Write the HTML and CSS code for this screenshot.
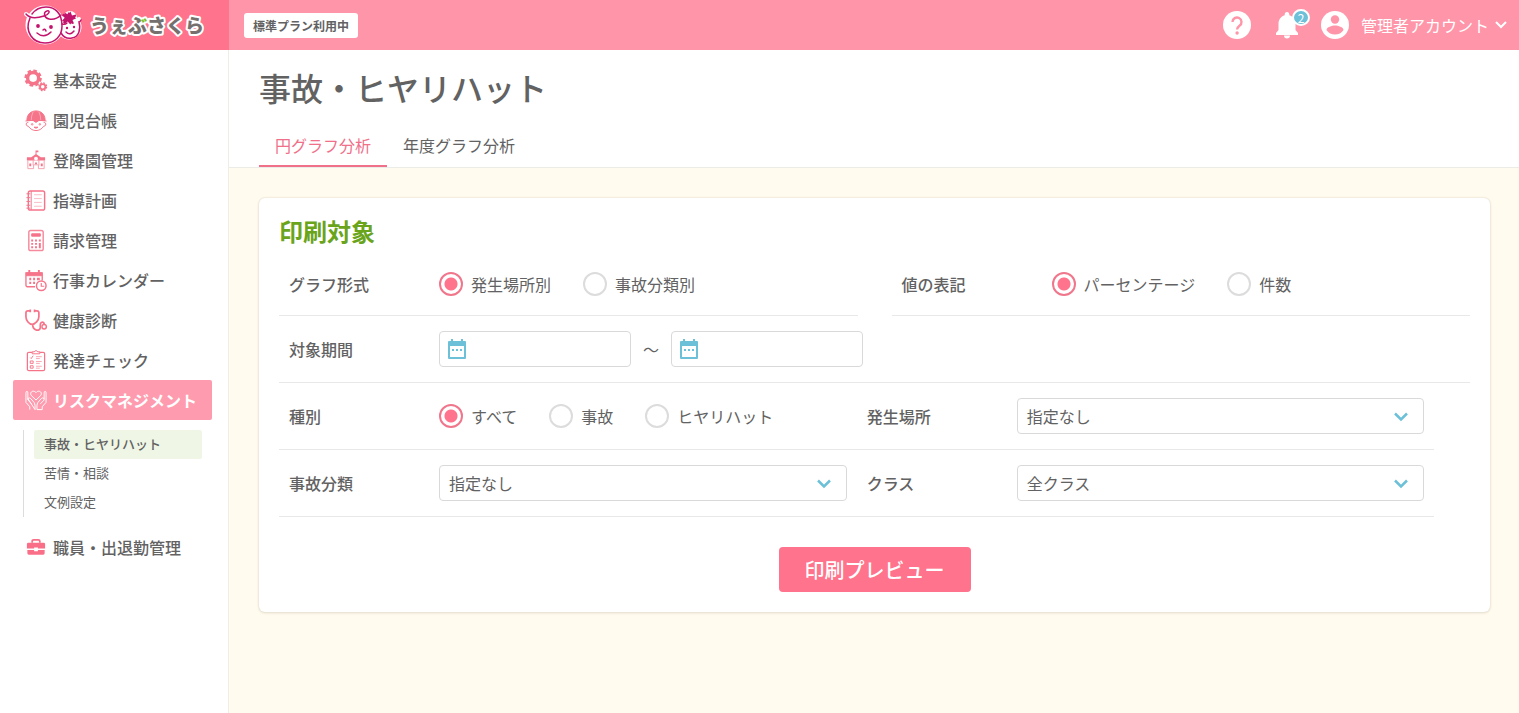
FILE: index.html
```html
<!DOCTYPE html>
<html lang="ja">
<head>
<meta charset="utf-8">
<title>事故・ヒヤリハット</title>
<meta name="viewport" content="width=device-width, initial-scale=1">
<link rel="stylesheet" href="styles.css">
</head>
<body>
<header class="topbar">
  <a class="brand" href="#">
    <svg class="brand-logo" width="190" height="50" viewBox="0 0 190 50" role="img" aria-label="うぇぶさくら">
      <defs>
        <pattern id="logo-ink" patternUnits="userSpaceOnUse" x="0" y="0" width="190" height="50">
          <rect width="190" height="50" fill="#75706e"/>
          <path d="M122 13h8v10h-5l-3-3z" fill="#7fbe26"/>
        </pattern>
      </defs>
      <g fill="#fff" stroke="#fff" stroke-width="4" stroke-linejoin="round" stroke-linecap="round">
        <circle cx="27" cy="25" r="17.500"/><circle cx="51" cy="27" r="10.500"/><circle cx="52" cy="18" r="5"/>
        <path d="M8 14q5 5 14 4M59 20l2-1"/>
      </g>
      <g fill="none" stroke="#c3146d" stroke-width="1.500" stroke-linecap="round">
        <path d="M12 18C6 32 15 43 27 43c10 0 17-7 17-17C44 13 37 7 28 7c-6 0-11 3-14 7"/>
        <path d="M8 14c4 5 12 4 18 2 5-1 7-6 3-5-4 1-3 7 2 8 5 1 9-1 12-4"/>
        <path d="M43 33c3 5 7 6 11 5 7-1 9-9 7-16q1 0 2-2M44 24q3 1 5-1"/>
        <path d="M19 33q7 6 14-1M48 32q4 4 8-1M25 30q2-2 3 1"/>
      </g>
      <g fill="#c3146d"><circle cx="20" cy="26" r="1.900"/><circle cx="33" cy="27" r="1.900"/><circle cx="49" cy="28" r="1.200"/><circle cx="56" cy="27" r="1.200"/>
        <path d="M50 12l1 1 1.500-1.500 1.500 4 4-1v2l-1 .5 1 1.500-3.500 1.500 1.500 3.500-2 .5-.8-.8-1 1.300-2.500-3-3.200 2.400-1.500-1.400.7-1-1.700-.8 2.700-3-2.700-2.500 1.200-1.500 1.200.5.3-1.500 3 1.500z"/></g>
      <text class="brand-name" x="72" y="33" fill="url(#logo-ink)">うぇぶさくら</text>
    </svg>
  </a>
  <div class="topbar-main">
    <span class="plan">標準プラン利用中</span>
    <div class="tools">
      <a class="tool" href="#" aria-label="ヘルプ">
        <svg width="28" height="28" viewBox="0 0 28 28"><circle cx="14" cy="14" r="14" fill="#fff"/><path d="M9.500 11a4.500 4.500 0 1 1 7 3.700c-1.600 1.200-2.400 1.800-2.400 3.700" fill="none" stroke="#ff95a9" stroke-width="2.400"/><circle cx="14.100" cy="22" r="1.700" fill="#ff95a9"/></svg>
      </a>
      <a class="tool" href="#" aria-label="お知らせ">
        <svg width="24" height="28" viewBox="0 0 24 28" fill="#fff"><path d="M12 1c1.500 0 2.300 1 2.300 2.500v.8c4 1.100 6.200 4.600 6.200 8.700v6l2.500 3v2H1v-2l2.500-3v-6c0-4.100 2.200-7.600 6.200-8.700v-.8C9.700 2 10.500 1 12 1zM9 24.500h6a3 3 0 0 1-6 0z"/></svg>
        <span class="count">2</span>
      </a>
      <a class="account" href="#">
        <svg width="28" height="28" viewBox="0 0 28 28"><circle cx="14" cy="14" r="14" fill="#fff"/><circle cx="14" cy="8.500" r="4.200" fill="#ff95a9"/><path d="M5.500 19c0-3 5.500-4.600 8.500-4.600s8.500 1.600 8.500 4.600c-2 3-5 4.600-8.500 4.600S7.500 22 5.500 19z" fill="#ff95a9"/></svg>
        <span>管理者アカウント</span>
        <svg class="account-arrow" width="12" height="8" viewBox="0 0 12 8" fill="none" stroke="#fff" stroke-width="2"><path d="M1 1l5 5 5-5"/></svg>
      </a>
    </div>
  </div>
</header>
<div class="layout">
  <nav class="sidebar">
    <a class="nav-item" href="#">
      <svg class="nav-icon" viewBox="0 0 24 24" fill="none" stroke="#f6748a"><circle cx="9" cy="9.500" r="5.800" stroke-width="3.600"/><circle cx="9" cy="9.500" r="7.900" stroke-width="2.400" stroke-dasharray="3.700 2.500"/><circle cx="19" cy="18.500" r="2.800" stroke-width="1.900"/><circle cx="19" cy="18.500" r="4" stroke-width="1.400" stroke-dasharray="1.800 1.350"/></svg>
      <span>基本設定</span></a>
    <a class="nav-item" href="#">
      <svg class="nav-icon" viewBox="0 0 24 24" fill="none" stroke="#f6748a"><path d="M2.500 11C3 5 7 2 12 2s9 3 9.500 9v1h-19z" fill="#f6748a"/><path d="M9 3Q7 7 7 12M15 3q2 4 2 9" stroke="#fbb9c4" stroke-width=".8"/><path d="M1 12.500q11-2 22 0M4 14c-3-.5-3 4 0 4 2 3 5 4.500 8 4.500s6-1.500 8-4.500c3 0 3-4.500 0-4"/><path d="M9 12h6l-3 2zM10 19h4q-2 2-4 0z" fill="#f6748a"/><circle cx="8" cy="16" r=".8"/><circle cx="16" cy="16" r=".8"/></svg>
      <span>園児台帳</span></a>
    <a class="nav-item" href="#">
      <svg class="nav-icon" viewBox="0 0 24 24" fill="#f6748a"><path d="M11.500 1.500h3v2h-2v2L17 8.500h4.500V12h-19V8.500H7l4.500-3z"/><path d="M3.500 12v8.500h6v-4h5v4h6V12M9 11v6M15 11v6" fill="none" stroke="#f6a0ae"/><circle cx="12" cy="10" r="2" fill="#fff"/><path d="M5 15h2v3H5zM17 15h2v3h-2zM11 14h2v2h-2z"/></svg>
      <span>登降園管理</span></a>
    <a class="nav-item" href="#">
      <svg class="nav-icon" viewBox="0 0 24 24" fill="none" stroke="#f6748a"><rect x="4" y="2" width="17" height="20" rx="2" stroke-width="1.500"/><path d="M7 2v20M2 5h4M2 9h4M2 13h4M2 17h4M2 20h4"/><path d="M10 6h8M10 10h8M10 14h8M10 18h8" stroke="#f9bac4"/></svg>
      <span>指導計画</span></a>
    <a class="nav-item" href="#">
      <svg class="nav-icon" viewBox="0 0 24 24" fill="none" stroke="#f68a9c"><rect x="4.500" y="1.500" width="15" height="21" rx="2" stroke-width="1.500"/><path d="M7.500 5h9v2.500h-9z" fill="#f6748a" stroke="#f6748a"/><path d="M7 12h2m2 0h2m2 0h2M7 15.500h2m2 0h2m2 0h2M7 19h2m2 0h2m2 0h2M16 15v5" stroke="#f6748a" stroke-width="2"/></svg>
      <span>請求管理</span></a>
    <a class="nav-item" href="#">
      <svg class="nav-icon" viewBox="0 0 24 24" fill="none" stroke="#f6748a"><path d="M11 18.500H3q-1.500 0-1.500-2V4h17v8" stroke-width="1.400"/><path d="M2 4h16v3H2z" fill="#f6748a"/><path d="M5 1v4M15 1v4" stroke-width="2"/><path d="M5 10.500h2m2 0h2m2 0h3M5 14.500h2m2 0h2" stroke-width="2.500"/><circle cx="17.500" cy="17.500" r="5" stroke-width="1.500"/><path d="M17.500 14.500v3.500h3" stroke-width="1.200"/></svg>
      <span>行事カレンダー</span></a>
    <a class="nav-item" href="#">
      <svg class="nav-icon" viewBox="0 0 24 24" fill="none" stroke="#f6748a" stroke-width="1.800"><path d="M6 2H3.500Q1.500 2 1.500 4v4c0 4 3.500 8 6.500 8s7-4 7-8V4q0-2-2-2H10.500M8.500 16c0 7 8 8 8 3 0-3-.5-4 1-5 2-1 3 .5 3 2M6 .6v2.800M10.500 .6v2.800"/><circle cx="20.500" cy="18.500" r="2.300" stroke-width="1.500"/></svg>
      <span>健康診断</span></a>
    <a class="nav-item" href="#">
      <svg class="nav-icon" viewBox="0 0 24 24" fill="none" stroke="#f6748a"><rect x="3" y="3.500" width="18" height="19" rx="1.500" stroke-width="1.300"/><path d="M8 5V3h2q2-3 4 0h2v2z" fill="#fff"/><path d="M6 9l1 1 2-3M6 12.500h3v2.500H6zM6 17.500h3V20H6z"/><path d="M12 8h6M12 10h4M12 13h6M12 15h4M12 18h6M12 20h4" stroke="#f9a5b3"/></svg>
      <span>発達チェック</span></a>
    <a class="nav-item nav-item-active" href="#">
      <svg class="nav-icon" viewBox="0 0 24 24" fill="none" stroke="#fff" stroke-linejoin="round"><path d="M12 11.500L7.300 7C4.500 3.800 9 .2 12 3.800 15 .2 19.500 3.800 16.700 7z"/><path d="M5.500 21.500v-3L1.500 14V4q0-1.500 1-1.500t1 1.500v7.500l4 4M3.500 10q1.500-1.500 3 0l3.500 4q1 1.500 1 3.500v4zM18.500 21.500v-3l4-4.500V4q0-1.500-1-1.500t-1 1.500v7.500l-4 4M20.500 10q-1.500-1.500-3 0L14 14q-1 1.500-1 3.500v4h5.500"/></svg>
      <span>リスクマネジメント</span></a>
    <div class="subnav">
      <a class="sub-item sub-item-active" href="#">事故・ヒヤリハット</a>
      <a class="sub-item" href="#">苦情・相談</a>
      <a class="sub-item" href="#">文例設定</a>
    </div>
    <a class="nav-item" href="#">
      <svg class="nav-icon" viewBox="0 0 24 24" fill="#fa6f88"><path d="M8 7V5.500Q8 4 9.500 4h5Q16 4 16 5.500V7" fill="none" stroke="#fa6f88" stroke-width="1.800"/><path d="M4 7h16q1.500 0 1.500 1.500V13H14v-1h-4v1H2.500V8.500Q2.500 7 4 7zM3 14.500h7v1.500h4v-1.500h7V18q0 1.500-1.500 1.500h-15Q3 19.500 3 18z"/></svg>
      <span>職員・出退勤管理</span></a>
  </nav>
  <main class="main">
    <div class="page-head">
      <h1 class="page-title">事故・ヒヤリハット</h1>
      <div class="tabs">
        <a class="tab tab-active" href="#">円グラフ分析</a>
        <a class="tab" href="#">年度グラフ分析</a>
      </div>
    </div>
    <form class="card">
      <h2 class="card-title">印刷対象</h2>
      <div class="row-split">
        <div class="field field-line field-first" role="radiogroup" aria-labelledby="l-type">
          <span class="label" id="l-type">グラフ形式</span>
          <div class="radios">
            <label class="choice"><input class="radio" type="radio" name="graph" checked>発生場所別</label>
            <label class="choice"><input class="radio" type="radio" name="graph">事故分類別</label>
          </div>
        </div>
        <div class="field field-line field-first" role="radiogroup" aria-labelledby="l-unit">
          <span class="label" id="l-unit">値の表記</span>
          <div class="radios">
            <label class="choice"><input class="radio" type="radio" name="unit" checked>パーセンテージ</label>
            <label class="choice"><input class="radio" type="radio" name="unit">件数</label>
          </div>
        </div>
      </div>
      <div class="field field-line">
        <label class="label" for="from">対象期間</label>
        <div class="period">
          <span class="date"><input class="control" id="from" type="text">
            <svg class="date-icon" width="20" height="22" viewBox="0 0 20 22"><path d="M2 4h16v16H2z" fill="none" stroke="#6cc0d8" stroke-width="2" stroke-linejoin="round"/><path d="M2 3h16v5H2zM4 1h2v4H4zM14 1h2v4h-2zM5 11h2v2H5zM9 11h2v2H9zM13 11h2v2h-2z" fill="#6cc0d8"/></svg></span>
          <span class="tilde">～</span>
          <span class="date"><input class="control" id="to" type="text" aria-label="対象期間 終了">
            <svg class="date-icon" width="20" height="22" viewBox="0 0 20 22"><path d="M2 4h16v16H2z" fill="none" stroke="#6cc0d8" stroke-width="2" stroke-linejoin="round"/><path d="M2 3h16v5H2zM4 1h2v4H4zM14 1h2v4h-2zM5 11h2v2H5zM9 11h2v2H9zM13 11h2v2h-2z" fill="#6cc0d8"/></svg></span>
        </div>
      </div>
      <div class="row-pair">
        <div class="field" role="radiogroup" aria-labelledby="l-kind">
          <span class="label" id="l-kind">種別</span>
          <div class="radios">
            <label class="choice"><input class="radio" type="radio" name="kind" checked>すべて</label>
            <label class="choice"><input class="radio" type="radio" name="kind">事故</label>
            <label class="choice"><input class="radio" type="radio" name="kind">ヒヤリハット</label>
          </div>
        </div>
        <div class="field">
          <label class="label" for="place">発生場所</label>
          <span class="picker"><select class="control" id="place"><option>指定なし</option></select>
            <svg class="picker-arrow" width="14" height="10" viewBox="0 0 14 10" fill="none" stroke="#6cc0d8" stroke-width="2.500"><path d="M1 1.500l6 6 6-6"/></svg></span>
        </div>
      </div>
      <div class="row-pair">
        <div class="field">
          <label class="label" for="category">事故分類</label>
          <span class="picker"><select class="control" id="category"><option>指定なし</option></select>
            <svg class="picker-arrow" width="14" height="10" viewBox="0 0 14 10" fill="none" stroke="#6cc0d8" stroke-width="2.500"><path d="M1 1.500l6 6 6-6"/></svg></span>
        </div>
        <div class="field">
          <label class="label" for="class">クラス</label>
          <span class="picker"><select class="control" id="class"><option>全クラス</option></select>
            <svg class="picker-arrow" width="14" height="10" viewBox="0 0 14 10" fill="none" stroke="#6cc0d8" stroke-width="2.500"><path d="M1 1.500l6 6 6-6"/></svg></span>
        </div>
      </div>
      <button class="submit" type="button">印刷プレビュー</button>
    </form>
  </main>
</div>
</body>
</html>
```
FILE: styles.css
```css
*, *::before, *::after { box-sizing: border-box; }
body {
  margin: 0;
  min-height: 100vh;
  display: flex;
  flex-direction: column;
  font-family: "Noto Sans CJK JP", "Noto Sans", sans-serif;
  font-size: 16px;
  line-height: 24px;
  color: #626262;
}
a { color: inherit; text-decoration: none; }
svg { display: block; flex: none; }

.topbar { display: flex; height: 50px; background: #ff95a9; }
.brand { flex: none; width: 229px; padding-left: 18px; background: #ff738c; }
.brand-name {
  font-size: 19px;
  font-weight: 900;
  stroke: #fff;
  stroke-width: 4px;
  stroke-linejoin: round;
  paint-order: stroke;
}
.topbar-main {
  flex: 1;
  display: flex;
  align-items: center;
  justify-content: space-between;
  padding: 0 12px 0 15px;
}
.plan {
  padding: 1px 9px 0;
  border-radius: 3px;
  background: #fff;
  font-size: 12px;
  font-weight: 700;
}
.tools { display: flex; align-items: center; gap: 24px; color: #fff; }
.tool { position: relative; }
.tool + .account { margin-left: -2px; }
.count {
  position: absolute;
  top: -2px;
  left: 17px;
  width: 18px;
  height: 17px;
  border: 2px solid #fff;
  border-radius: 50%;
  background: #6cc0d8;
  font-size: 12px;
  line-height: 13px;
  text-align: center;
}
.account { display: flex; align-items: center; gap: 12px; }
.account-arrow { margin-left: -6px; }

.layout { flex: 1; display: flex; }
.sidebar {
  flex: none;
  width: 229px;
  padding: 10px 16px 0 13px;
  border-right: 1px solid #efeee6;
}
.nav-item {
  display: flex;
  align-items: center;
  gap: 5px;
  height: 40px;
  padding-left: 11px;
  border-radius: 2px;
  font-weight: 500;
}
.nav-item-active { background: #ff9bae; color: #fff; font-weight: 700; }
.nav-icon { width: 24px; height: 24px; padding-top: 1px; }
.subnav {
  margin: 10px;
  padding-left: 10px;
  border-left: 1px solid #dcdcdc;
}
.sub-item {
  display: block;
  padding: 0 10px 2px;
  border-radius: 2px;
  font-size: 13px;
  line-height: 27px;
}
.sub-item-active { background: #eff6e6; font-weight: 500; }

.main { flex: 1; min-width: 0; background: #fffbee; }
.page-head {
  padding: 13px 30px 0;
  border-bottom: 1px solid #ebebe8;
  background: #fff;
}
.page-title { margin: 0; font-size: 32px; font-weight: 500; line-height: 48px; }
.tabs { display: flex; margin-top: 14px; }
.tab { padding: 8px 16px; border-bottom: 2px solid transparent; }
.tab-active { border-color: #f0708a; color: #f0708a; }

.card {
  margin: 30px 29px 30px 30px;
  padding: 15px 20px 20px;
  border-radius: 6px;
  background: #fff;
  box-shadow: 0 0 2px #d8d3c4, 0 1px 3px #e8e2d2;
}
.card-title { margin: 0; color: #6aa41b; font-size: 24px; font-weight: 700; line-height: 36px; }
.row-split { display: grid; grid-template-columns: 1fr 1fr; gap: 34px; }
.row-pair {
  display: grid;
  grid-template-columns: 1fr 1fr;
  width: 97%;
  border-bottom: 1px solid #e8e8e8;
}
.field { display: flex; align-items: center; min-height: 66px; padding: 0 10px; }
.field-line { min-height: 67px; border-bottom: 1px solid #e8e8e8; }
.field-first { padding-top: 3px; }
.label { flex: none; width: 150px; font-weight: 500; }
.radios { display: flex; gap: 32px; }
.choice { display: flex; align-items: center; gap: 8px; line-height: 22px; }
.radio {
  appearance: none;
  flex: none;
  width: 24px;
  height: 24px;
  margin: 0;
  border: 2px solid #dcdcdc;
  border-radius: 50%;
  background: #fff;
}
.radio:checked {
  border-color: #f0768c;
  background: radial-gradient(circle, #ff738c 6px, #fff 7px);
}
.period { display: flex; align-items: center; }
.tilde { width: 40px; text-align: center; }
.date { position: relative; width: 192px; }
.date-icon { position: absolute; left: 8px; top: 7px; pointer-events: none; }
.picker { position: relative; flex: 1; }
.picker-arrow { position: absolute; right: 16px; top: 14px; pointer-events: none; }
.control {
  appearance: none;
  display: block;
  width: 100%;
  height: 36px;
  padding: 0 9px;
  border: 1px solid #d9d9d9;
  border-radius: 4px;
  background: #fff;
  color: inherit;
  font: inherit;
}
.date .control { padding-left: 36px; }
.submit {
  display: block;
  min-width: 192px;
  height: 45px;
  margin: 30px auto 0;
  padding: 0 26px;
  border: 0;
  border-radius: 4px;
  background: #ff738c;
  color: #fff;
  font-family: inherit;
  font-size: 20px;
  font-weight: 500;
}
```
